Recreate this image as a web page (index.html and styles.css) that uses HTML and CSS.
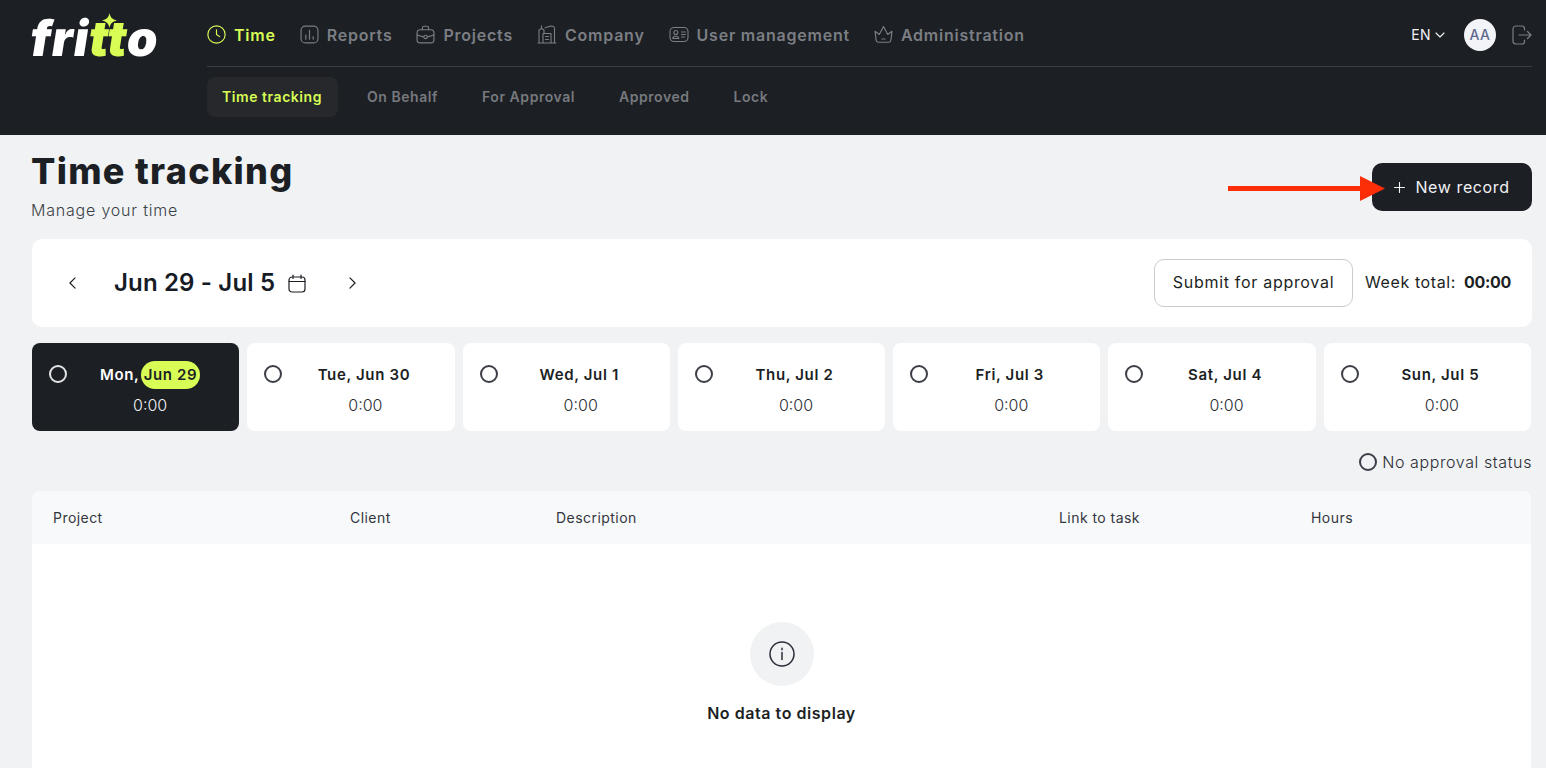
FILE: index.html
```html
<!DOCTYPE html>
<html lang="en">
<head>
<meta charset="utf-8">
<title>Time tracking</title>
<link rel="stylesheet" href="styles.css">
</head>
<body>
<header class="topbar">
  <div class="logo">
    <span class="logo-text">fri<span class="logo-accent">tt</span>o</span>
    <svg class="logo-star" viewBox="0 0 16 16"><path d="M8 0C8.800 4.600 11 7 16 8 11 9 8.800 11.400 8 16 7.200 11.400 5 9 0 8 5 7 7.200 4.600 8 0Z"/></svg>
  </div>
  <div class="topbar-main">
    <div class="nav-row">
      <nav class="nav">
        <a class="nav-item active">
          <svg class="ico" viewBox="0 0 18 18"><circle cx="9" cy="9" r="8.200"/><path d="M9 4.500V9l3 2"/></svg>Time</a>
        <a class="nav-item">
          <svg class="ico" viewBox="0 0 18 18"><rect x="1" y="1" width="16" height="16" rx="4"/><path d="M5.500 9.500v4M9 5v8.500M12.500 11v2.500"/></svg>Reports</a>
        <a class="nav-item">
          <svg class="ico" viewBox="0 0 18 18"><rect x="1" y="4.500" width="16" height="12.500" rx="3"/><path d="M6 4.500V3a1.800 1.800 0 0 1 1.800-1.800h2.400A1.800 1.800 0 0 1 12 3v1.500M1 9.500l6 1.800M17 9.500l-6 1.800"/><circle cx="9" cy="11.300" r="1.600"/></svg>Projects</a>
        <a class="nav-item">
          <svg class="ico ico-wide" viewBox="0 0 20 19"><path d="M1 18h18M2 18V5l2.500-1.500L7 5v3M8 2.800 14 1c2 0 3.500 1 3.500 2.500V18M6 18V8.500h8V18M8.500 11.500h3M8.500 14.500h3M4.500 3.500V.8"/></svg>Company</a>
        <a class="nav-item">
          <svg class="ico ico-wide" viewBox="0 0 20 16"><rect x="1" y="1" width="18" height="14" rx="4"/><circle cx="6.800" cy="6" r="2"/><path d="M3.800 12a3 2.200 0 0 1 6 0ZM12.500 5.500h4M12.500 8h4M12.500 10.500h3"/></svg>User management</a>
        <a class="nav-item">
          <svg class="ico" viewBox="0 0 18 17"><path d="M4 15.800h10a2 2 0 0 0 2-1.800l1-8.500-4 3L9 1 5 8.500l-4-3L2 14a2 2 0 0 0 2 1.800ZM7.500 12.800h3"/></svg>Administration</a>
      </nav>
      <div class="account">
        <span class="lang">EN<svg class="lang-chevron" viewBox="0 0 10 6"><path d="M1 1l4 4 4-4"/></svg></span>
        <span class="avatar">AA</span>
        <svg class="logout" viewBox="0 0 20 20"><path d="M12.500 5V3.500A2.500 2.500 0 0 0 10 1H4a3 3 0 0 0-3 3v12a3 3 0 0 0 3 3h6a2.500 2.500 0 0 0 2.500-2.500V15M7 10h12M15.500 6.500L19 10l-3.500 3.500"/></svg>
      </div>
    </div>
    <nav class="subnav">
      <a class="subnav-item active">Time tracking</a>
      <a class="subnav-item">On Behalf</a>
      <a class="subnav-item">For Approval</a>
      <a class="subnav-item">Approved</a>
      <a class="subnav-item">Lock</a>
    </nav>
  </div>
</header>

<main class="page">
  <div class="page-head">
    <div class="page-heading">
      <h1 class="page-title">Time tracking</h1>
      <p class="page-sub">Manage your time</p>
    </div>
    <button class="new-record">
      <svg class="plus" viewBox="0 0 12 12"><path d="M6 .5v11M.5 6h11"/></svg>New record
    </button>
    <svg class="callout-arrow" viewBox="0 0 158 25"><path d="M0 10H132V0L157 12.500 132 25V15H0Z"/></svg>
  </div>

  <section class="week-card">
    <div class="week-nav">
      <svg class="chev" viewBox="0 0 8 14"><path d="M7 1L1 7l6 6"/></svg>
      <span class="week-range">Jun 29 - Jul 5</span>
      <svg class="cal" viewBox="0 0 18 19"><rect x="1" y="3" width="16" height="15" rx="3"/><path d="M1 7.500h16M5 1v3.500M13 1v3.500"/></svg>
      <svg class="chev chev-next" viewBox="0 0 8 14"><path d="M1 1l6 6-6 6"/></svg>
    </div>
    <div class="week-actions">
      <button class="submit">Submit for approval</button>
      <span class="week-total">Week total:<b>00:00</b></span>
    </div>
  </section>

  <section class="days">
    <div class="day selected"><i class="radio"></i><div class="day-body"><div class="day-name">Mon, <span class="today">Jun 29</span></div><div class="day-hours">0:00</div></div></div>
    <div class="day"><i class="radio"></i><div class="day-body"><div class="day-name">Tue, Jun 30</div><div class="day-hours">0:00</div></div></div>
    <div class="day"><i class="radio"></i><div class="day-body"><div class="day-name">Wed, Jul 1</div><div class="day-hours">0:00</div></div></div>
    <div class="day"><i class="radio"></i><div class="day-body"><div class="day-name">Thu, Jul 2</div><div class="day-hours">0:00</div></div></div>
    <div class="day"><i class="radio"></i><div class="day-body"><div class="day-name">Fri, Jul 3</div><div class="day-hours">0:00</div></div></div>
    <div class="day"><i class="radio"></i><div class="day-body"><div class="day-name">Sat, Jul 4</div><div class="day-hours">0:00</div></div></div>
    <div class="day"><i class="radio"></i><div class="day-body"><div class="day-name">Sun, Jul 5</div><div class="day-hours">0:00</div></div></div>
  </section>

  <div class="status"><i class="radio"></i>No approval status</div>

  <section class="table">
    <div class="table-head">
      <span>Project</span><span>Client</span><span>Description</span><span>Link to task</span><span>Hours</span>
    </div>
    <div class="empty">
      <div class="empty-icon">
        <svg viewBox="0 0 26 26"><circle cx="13" cy="13" r="12"/><path d="M13 11.500v7M13 7.200v1.600"/></svg>
      </div>
      <p class="empty-text">No data to display</p>
    </div>
  </section>
</main>
</body>
</html>
```
FILE: styles.css
```css
* { box-sizing: border-box; }
html, body { margin: 0; height: 100%; overflow: hidden; }
body {
  display: flex;
  flex-direction: column;
  background: #f1f2f4;
  color: #1c1f24;
  font-family: "Inter", "Noto Sans", sans-serif;
}
svg { fill: none; stroke: currentColor; stroke-linecap: round; stroke-linejoin: round; flex: none; }

/* top bar */
.topbar {
  display: flex;
  height: 135px;
  flex: none;
  background: #1c1f24;
  padding: 0 14px 0 31px;
}
.logo { position: relative; width: 176px; flex: none; padding-top: 9px; }
.logo-text {
  display: inline-block;
  transform: skewX(-9deg);
  font-family: "Inter", sans-serif;
  font-size: 49px;
  line-height: 60px;
  font-weight: 900;
  letter-spacing: .7px;
  color: #fff;
}
.logo-accent { color: #d8fd55; }
.logo-star { position: absolute; left: 71px; top: 13px; width: 15px; height: 15px; fill: #d8fd55; stroke: none; }
.topbar-main { flex: 1; display: flex; flex-direction: column; }
.nav-row {
  display: flex;
  justify-content: space-between;
  align-items: center;
  height: 67px;
  padding-top: 3px;
  border-bottom: 1px solid #3a3d42;
}
.nav { display: flex; gap: 24px; }
.nav-item {
  display: flex;
  align-items: center;
  gap: 8px;
  font-size: 16px;
  font-weight: 600;
  letter-spacing: .77px;
  color: #7b7e83;
}
.nav-item.active { color: #d8fd55; }
.ico { width: 19px; height: 19px; stroke-width: 1.100; }
.ico-wide { width: 20px; }
.account { display: flex; align-items: center; }
.lang { display: flex; align-items: center; gap: 4px; font-size: 14px; font-weight: 400; letter-spacing: .4px; color: #f1f2f5; }
.lang-chevron { width: 10px; height: 6px; stroke-width: 1.100; }
.avatar {
  width: 32px; height: 32px;
  margin: 0 16px 0 19px;
  display: flex; align-items: center; justify-content: center;
  border-radius: 50%;
  background: #f3f4f8;
  color: #5d6a8c;
  font-size: 14px;
  font-weight: 500;
  letter-spacing: .4px;
}
.logout { width: 20px; height: 20px; color: #7b7e83; stroke-width: 1.200; }
.subnav { display: flex; gap: 14px; padding-top: 10px; }
.subnav-item {
  height: 40px;
  display: flex;
  align-items: center;
  padding: 0 15px 2px;
  border-radius: 8px;
  font-size: 14px;
  font-weight: 600;
  letter-spacing: .55px;
  color: #77797e;
}
.subnav-item.active { background: #26282c; color: #d8fd55; padding-right: 16px; }

/* page */
.page { flex: 1; min-height: 0; display: flex; flex-direction: column; padding: 0 14px 0 32px; }
.page-head { position: relative; display: flex; justify-content: space-between; align-items: flex-start; height: 104px; flex: none; }
.page-heading { padding-top: 14px; }
.page-title { margin: 0 0 0 -1px; font-size: 36px; line-height: 44px; font-weight: 800; letter-spacing: 1.3px; color: #1c1f24; }
.page-sub { margin: 7px 0 0 -1px; font-size: 16px; line-height: 20px; font-weight: 300; letter-spacing: .8px; color: #3b3f47; }
.new-record {
  display: flex; align-items: center; justify-content: center; gap: 10px;
  width: 160px; height: 48px;
  margin-top: 28px;
  padding-bottom: 1px;
  border: 0; border-radius: 10px;
  background: #1c1f24; color: #f1f2f5;
  font: 400 16px "Inter", sans-serif;
  letter-spacing: .6px;
}
.plus { width: 11px; height: 11px; stroke-width: 1.200; }
.callout-arrow {
  position: absolute; left: 1196px; top: 41px;
  width: 158px; height: 25px;
  fill: #fb2e08; stroke: none;
}
.week-card {
  height: 88px;
  flex: none;
  display: flex; justify-content: space-between; align-items: center;
  padding: 0 21px 0 37px;
  background: #fff;
  border-radius: 10px;
}
.week-nav { display: flex; align-items: center; }
.chev { width: 7px; height: 12px; stroke-width: 1.400; color: #1c1f24; }
.week-range { margin: 0 13px 0 38px; padding-bottom: 1px; font-size: 24px; font-weight: 600; letter-spacing: .16px; color: #161b26; }
.cal { width: 18px; height: 19px; stroke-width: 1.200; }
.chev-next { margin-left: 43px; }
.week-actions { display: flex; align-items: center; gap: 12px; }
.submit {
  width: 199px; height: 48px;
  padding: 0 0 2px;
  background: #fff;
  border: 1px solid #c9cbd1;
  border-radius: 10px;
  color: #1c1f24;
  font: 400 16px "Inter", sans-serif;
  letter-spacing: .7px;
}
.week-total { display: flex; gap: 8px; padding-bottom: 2px; font-size: 16px; font-weight: 400; letter-spacing: .6px; }
.week-total b { font-weight: 700; letter-spacing: -.3px; }

/* days */
.days { display: grid; grid-template-columns: repeat(7, 1fr); gap: 8px; margin: 16px 1px 0 0; flex: none; }
.day {
  height: 88px;
  display: flex;
  padding: 22px 6px 0 17px;
  background: #fff;
  border-radius: 8px;
}
.radio { width: 18px; height: 18px; flex: none; border-radius: 50%; border: 2px solid #3c3f47; }
.day-body { flex: 1; text-align: center; }
.day-name { height: 20px; line-height: 20px; font-size: 15px; font-weight: 600; letter-spacing: .65px; white-space: nowrap; margin-right: 3px; }
.day-hours { margin-top: 10px; line-height: 20px; font-size: 16px; font-weight: 300; color: #2b2e34; }
.day.selected { background: #1c1f24; }
.day.selected .radio { border-color: #e4e5e8; }
.day.selected .day-name { color: #fff; margin-right: 0; }
.day.selected .day-hours { color: #f1f2f5; }
.today {
  display: inline-block;
  margin: -4px 0 -4px -3px;
  padding: 0 3px;
  height: 28px;
  line-height: 28px;
  border-radius: 14px;
  background: #d8fd55;
  color: #1c1f24;
}
.status {
  display: flex; justify-content: flex-end; align-items: center; gap: 5px;
  height: 20px;
  margin: 21px 0 19px;
  flex: none;
  font-size: 16px;
  font-weight: 300;
  letter-spacing: .6px;
  color: #2b2e34;
}

/* table */
.table { flex: 1; margin-right: 1px; background: #fff; border-radius: 8px 8px 0 0; overflow: hidden; }
.table-head {
  display: grid;
  grid-template-columns: 297px 206px 503px 252px 1fr;
  align-items: center;
  height: 53px;
  padding-left: 21px;
  background: #f8f9fb;
  font-size: 14px;
  font-weight: 400;
  letter-spacing: .45px;
  color: #33363d;
}
.empty { display: flex; flex-direction: column; align-items: center; padding-top: 78px; }
.empty-icon { width: 64px; height: 64px; display: flex; align-items: center; justify-content: center; border-radius: 50%; background: #f1f2f4; }
.empty-icon svg { width: 26px; height: 26px; stroke-width: 1.500; color: #2b2e38; }
.empty-text { margin: 17px 0 0; font-size: 16px; line-height: 20px; font-weight: 600; letter-spacing: .55px; color: #1c1f24; }
```
